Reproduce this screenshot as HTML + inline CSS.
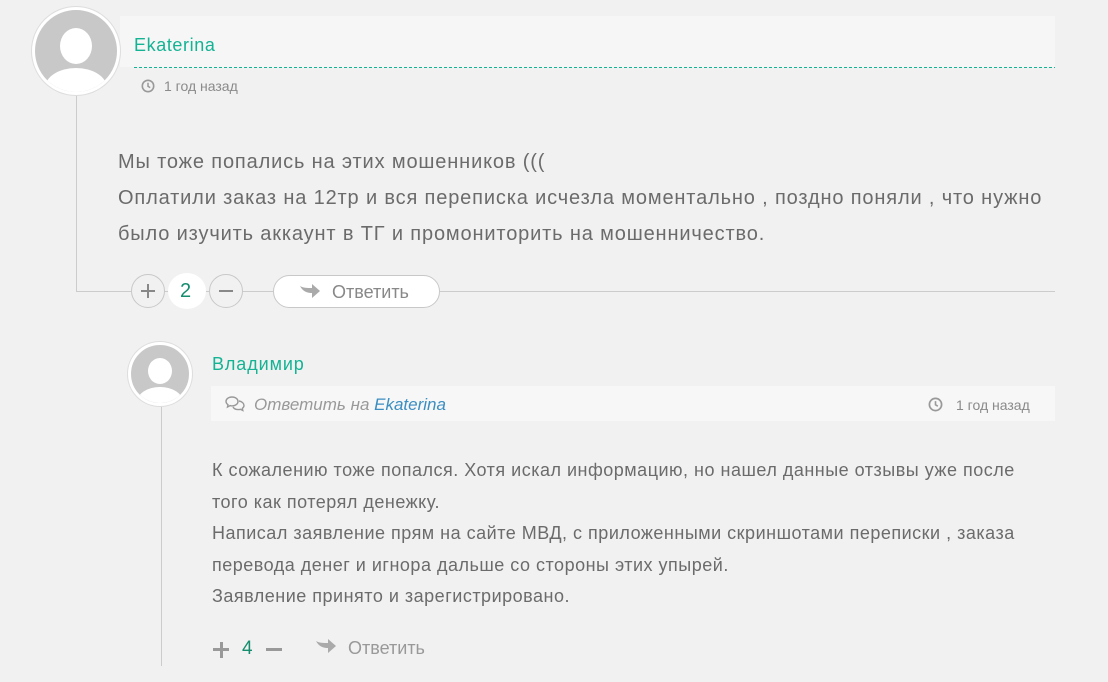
<!DOCTYPE html>
<html><head><meta charset="utf-8"><style>
body{margin:0;width:1108px;height:682px;background:#f1f1f1;font-family:"Liberation Sans",sans-serif;position:relative;overflow:hidden;color:#666}
.a{position:absolute}
.av{position:absolute;border-radius:50%;background:#c8c8c8;border:3px solid #fff;box-shadow:0 0 0 1px #ddd;overflow:hidden}
.av .h{position:absolute;background:#fff;border-radius:50%}
.av .b{position:absolute;background:#fff;border-radius:50% 50% 0 0}
.t{white-space:nowrap}
.circ{position:absolute;width:34px;height:34px;border:1px solid #c8c8c8;border-radius:50%;background:#f1f1f1;box-sizing:border-box}
.teal{color:#13b394}
</style></head><body>
<div class="a" style="left:76px;top:95px;width:1px;height:197px;background:#ccc"></div>
<div class="a" style="left:76px;top:291px;width:979px;height:1px;background:#ccc"></div>
<div class="a" style="left:161px;top:404px;width:1px;height:262px;background:#ccc"></div>

<div class="a" style="left:120px;top:16px;width:935px;height:51px;background:#f6f6f6"></div>
<div class="a" style="left:134px;top:67px;width:921px;height:1px;background:repeating-linear-gradient(90deg,#13b394 0 3px,transparent 3px 5px)"></div>
<div class="av" style="left:32px;top:7px;width:82px;height:82px">
 <div class="h" style="left:25px;top:18px;width:32px;height:36px"></div>
 <div class="b" style="left:10px;top:58px;width:62px;height:40px"></div>
</div>
<div class="a t teal" style="left:134px;top:35px;font-size:18px;letter-spacing:0.6px">Ekaterina</div>
<svg class="a" style="left:141px;top:79px" width="14" height="14" viewBox="0 0 14 14"><circle cx="7" cy="7" r="5.7" fill="none" stroke="#999" stroke-width="1.6"/><path d="M7 3.8V7.3L9.2 8.6" fill="none" stroke="#999" stroke-width="1.5"/></svg>
<div class="a t" style="left:164px;top:78px;font-size:14px;color:#8a8a8a">1 год назад</div>

<div class="a t" style="left:118px;top:144px;font-size:20px;line-height:36px;letter-spacing:0.85px;color:#6b6b6b">Мы тоже попались на этих мошенников (((<br>Оплатили заказ на 12тр и вся переписка исчезла моментально , поздно поняли , что нужно<br>было изучить аккаунт в ТГ и промониторить на мошенничество.</div>

<div class="circ" style="left:131px;top:274px"></div>
<div class="a" style="left:141px;top:290px;width:14px;height:2px;background:#888"></div>
<div class="a" style="left:147px;top:284px;width:2px;height:14px;background:#888"></div>
<div class="a" style="left:168px;top:273px;width:38px;height:36px;border-radius:50%;background:#fff"></div>
<div class="a t" style="left:180px;top:280px;font-size:20px;color:#168d6e">2</div>
<div class="circ" style="left:209px;top:274px"></div>
<div class="a" style="left:219px;top:290px;width:14px;height:2px;background:#888"></div>
<div class="a" style="left:273px;top:275px;width:167px;height:33px;border:1px solid #c8c8c8;border-radius:17px;background:#fff;box-sizing:border-box"></div>
<svg class="a" style="left:299px;top:283px" width="22" height="18" viewBox="0 0 22 18"><path d="M1 3C4 9 9 10 13 10V15L21 8L13 1V5C8 5 4 5 1 3Z" fill="#aaa"/></svg>
<div class="a t" style="left:332px;top:282px;font-size:18px;color:#888">Ответить</div>

<div class="av" style="left:128px;top:342px;width:58px;height:58px">
 <div class="h" style="left:17px;top:13px;width:24px;height:26px"></div>
 <div class="b" style="left:6px;top:42px;width:46px;height:30px"></div>
</div>
<div class="a t teal" style="left:212px;top:354px;font-size:18px;letter-spacing:0.9px">Владимир</div>
<div class="a" style="left:211px;top:386px;width:844px;height:35px;background:#f7f7f7"></div>
<svg class="a" style="left:225px;top:396px" width="20" height="16" viewBox="0 0 20 16"><path d="M7 1C3.5 1 1 3 1 5.5C1 7 2 8 3 8.8L2.5 11L5 9.6C5.6 9.8 6.3 9.9 7 9.9C10.5 9.9 13 7.9 13 5.5C13 3 10.5 1 7 1Z" fill="none" stroke="#999" stroke-width="1.4"/><path d="M14 5C17 5.5 19 7.3 19 9.4C19 10.7 18.3 11.7 17.3 12.4L17.8 14.5L15.3 13.3C14.7 13.5 14 13.6 13.3 13.6C10.8 13.6 8.8 12.5 8 11" fill="none" stroke="#999" stroke-width="1.4"/></svg>
<div class="a t" style="left:254px;top:395px;font-size:17px;font-style:italic;color:#999">Ответить на <span style="color:#3b8ec2">Ekaterina</span></div>
<svg class="a" style="left:928px;top:397px" width="15" height="15" viewBox="0 0 14 14"><circle cx="7" cy="7" r="5.7" fill="none" stroke="#999" stroke-width="1.6"/><path d="M7 3.8V7.3L9.2 8.6" fill="none" stroke="#999" stroke-width="1.5"/></svg>
<div class="a t" style="left:956px;top:397px;font-size:14px;color:#8a8a8a">1 год назад</div>

<div class="a t" style="left:212px;top:455px;font-size:18px;line-height:31.5px;letter-spacing:0.5px;color:#6b6b6b">К сожалению тоже попался. Хотя искал информацию, но нашел данные отзывы уже после<br>того как потерял денежку.<br>Написал заявление прям на сайте МВД, с приложенными скриншотами переписки , заказа<br>перевода денег и игнора дальше со стороны этих упырей.<br>Заявление принято и зарегистрировано.</div>

<div class="a" style="left:213px;top:648px;width:16px;height:3px;background:#999"></div>
<div class="a" style="left:219.5px;top:641.5px;width:3px;height:16px;background:#999"></div>
<div class="a t" style="left:242px;top:638px;font-size:19px;color:#168d6e">4</div>
<div class="a" style="left:266px;top:648px;width:16px;height:3px;background:#999"></div>
<svg class="a" style="left:315px;top:638px" width="22" height="18" viewBox="0 0 22 18"><path d="M1 3C4 9 9 10 13 10V15L21 8L13 1V5C8 5 4 5 1 3Z" fill="#aaa"/></svg>
<div class="a t" style="left:348px;top:638px;font-size:18px;color:#999">Ответить</div>
</body></html>
